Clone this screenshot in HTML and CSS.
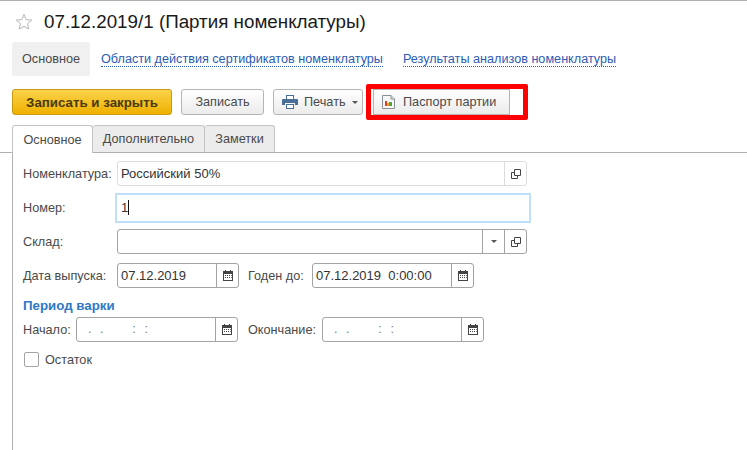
FILE: index.html
```html
<!DOCTYPE html>
<html lang="ru">
<head>
<meta charset="utf-8">
<title>Партия номенклатуры</title>
<link rel="stylesheet" href="styles.css">
</head>
<body>
	<div class="head">
		<svg class="star" width="18" height="17" viewBox="0 0 18 17"><path d="M9 1.500l2.200 5.100 5.500.5-4.200 3.600 1.300 5.400L9 13.200l-4.800 2.900 1.300-5.400L1.300 7.100l5.500-.5z" fill="none" stroke="#b5b5b5"/></svg>
		<h1 class="title">07.12.2019/1 (Партия номенклатуры)</h1>
	</div>

	<div class="sections">
		<span class="section active">Основное</span>
		<a class="section link">Области действия сертификатов номенклатуры</a>
		<a class="section link">Результаты анализов номенклатуры</a>
	</div>

	<div class="toolbar">
		<button class="btn primary">Записать и закрыть</button>
		<button class="btn save">Записать</button>
		<button class="btn print">
			<svg width="16" height="14" viewBox="0 0 16 14"><path d="M4 0h8v4H4z" fill="#4a6f96"/><path d="M5 1h6v3H5z" fill="#fff"/><path d="M1 4h14a1 1 0 0 1 1 1v5h-3V8H3v2H0V5a1 1 0 0 1 1-1z" fill="#4a6f96"/><path d="M4 9h8v5H4z" fill="#4a6f96"/><path d="M5 10h6v3H5z" fill="#fff"/></svg>
			Печать
			<span class="caret"></span>
		</button>
		<button class="btn report">
			<svg width="13" height="14" viewBox="0 0 13 14"><path d="M.5.500h8.500l3.500 3.500v9.500H.5z" fill="#f6f6f6" stroke="#8a8f96"/><path d="M9 .5v3.500h3.500" fill="#ddd" stroke="#8a8f96"/><path d="M3 6h2v5H3z" fill="#d8402a"/><path d="M5 8h2v3H5z" fill="#e8a020"/><path d="M7 7h3v4H7z" fill="#4aa83a"/></svg>
			Паспорт партии
		</button>
		<div class="highlight"></div>
	</div>

	<div class="tabs">
		<span class="tab active">Основное</span>
		<span class="tab extra">Дополнительно</span>
		<span class="tab notes">Заметки</span>
	</div>

	<div class="page">
		<div class="row row-nom">
			<label class="lbl">Номенклатура:</label>
			<div class="field light w-nom">
				<span class="val">Российский 50%</span>
				<span class="cell"><svg class="ic" width="10" height="10" viewBox="0 0 10 10"><path d="M3.500.500h6v6h-6zM3.500 3.500h-3v6h6v-3" fill="none" stroke="#444"/></svg></span>
			</div>
		</div>

		<div class="row row-num">
			<label class="lbl lbl-num">Номер:</label>
			<div class="focus">1<span class="cursor"></span></div>
		</div>

		<div class="row row-store">
			<label class="lbl">Склад:</label>
			<div class="field w-nom">
				<span class="val"></span>
				<span class="cell"><span class="caret"></span></span>
				<span class="cell"><svg class="ic" width="10" height="10" viewBox="0 0 10 10"><path d="M3.500.500h6v6h-6zM3.500 3.500h-3v6h6v-3" fill="none" stroke="#444"/></svg></span>
			</div>
		</div>

		<div class="row row-date">
			<label class="lbl">Дата выпуска:</label>
			<div class="field w-date">
				<span class="val">07.12.2019</span>
				<span class="cell"><svg class="ic" width="10" height="11" viewBox="0 0 10 11"><path d="M0 1h10v10H0z" fill="#444"/><path d="M2 0h1v2H2zM7 0h1v2H7z" fill="#444"/><path d="M1 4h8v6H1z" fill="#fff"/><path d="M2 5h1v1H2zM4 5h1v1H4zM6 5h1v1H6zM8 5h.7v1H8zM2 7h1v1H2zM4 7h1v1H4zM6 7h1v1H6zM8 7h.7v1H8z" fill="#444"/></svg></span>
			</div>
			<label class="lbl-second until">Годен до:</label>
			<div class="field w-until">
				<span class="val">07.12.2019&nbsp; 0:00:00</span>
				<span class="cell"><svg class="ic" width="10" height="11" viewBox="0 0 10 11"><path d="M0 1h10v10H0z" fill="#444"/><path d="M2 0h1v2H2zM7 0h1v2H7z" fill="#444"/><path d="M1 4h8v6H1z" fill="#fff"/><path d="M2 5h1v1H2zM4 5h1v1H4zM6 5h1v1H6zM8 5h.7v1H8zM2 7h1v1H2zM4 7h1v1H4zM6 7h1v1H6zM8 7h.7v1H8z" fill="#444"/></svg></span>
			</div>
		</div>

		<div class="group">Период варки</div>

		<div class="row">
			<label class="lbl lbl-start">Начало:</label>
			<div class="field w-until">
				<span class="val mask">&nbsp;&nbsp;.&nbsp;&nbsp;.&nbsp;&nbsp;&nbsp;&nbsp;&nbsp;&nbsp;&nbsp;:&nbsp;&nbsp;:</span>
				<span class="cell"><svg class="ic" width="10" height="11" viewBox="0 0 10 11"><path d="M0 1h10v10H0z" fill="#444"/><path d="M2 0h1v2H2zM7 0h1v2H7z" fill="#444"/><path d="M1 4h8v6H1z" fill="#fff"/><path d="M2 5h1v1H2zM4 5h1v1H4zM6 5h1v1H6zM8 5h.7v1H8zM2 7h1v1H2zM4 7h1v1H4zM6 7h1v1H6zM8 7h.7v1H8z" fill="#444"/></svg></span>
			</div>
			<label class="lbl-second finish">Окончание:</label>
			<div class="field w-until">
				<span class="val mask">&nbsp;&nbsp;.&nbsp;&nbsp;.&nbsp;&nbsp;&nbsp;&nbsp;&nbsp;&nbsp;&nbsp;:&nbsp;&nbsp;:</span>
				<span class="cell"><svg class="ic" width="10" height="11" viewBox="0 0 10 11"><path d="M0 1h10v10H0z" fill="#444"/><path d="M2 0h1v2H2zM7 0h1v2H7z" fill="#444"/><path d="M1 4h8v6H1z" fill="#fff"/><path d="M2 5h1v1H2zM4 5h1v1H4zM6 5h1v1H6zM8 5h.7v1H8zM2 7h1v1H2zM4 7h1v1H4zM6 7h1v1H6zM8 7h.7v1H8z" fill="#444"/></svg></span>
			</div>
		</div>

		<div class="check-row">
			<span class="box"></span>
			<span>Остаток</span>
		</div>
	</div>
</body>
</html>
```

FILE: styles.css
```css
html, body {
	margin: 0;
	height: 450px;
	overflow: hidden;
}
body {
	background: #fff;
	border-top: 1px solid #b0b0b0;
	box-sizing: border-box;
	font-family: "Liberation Sans", Arial, sans-serif;
	font-size: 12.7px;
	color: #4a4a4a;
}
.head {
	display: flex;
	align-items: center;
	height: 41px;
	padding-left: 15px;
}
.star {
	margin-right: 11px;
}
.title {
	margin: 0;
	font-size: 18.8px;
	font-weight: 400;
	color: #1a1a1a;
}
.sections {
	display: flex;
	align-items: center;
	height: 34px;
	padding-left: 12px;
}
.section.active {
	display: flex;
	align-items: center;
	justify-content: center;
	width: 78px;
	height: 34px;
	background: #f0f0f0;
	border-radius: 3px;
	margin-right: 11px;
}
.link {
	color: #2c5cb5;
	border-bottom: 1px dotted #2c5cb5;
	margin-right: 20px;
	font-size: 12.65px;
}
.toolbar {
	position: relative;
	display: flex;
	margin-top: 13px;
	padding-left: 12px;
	height: 26px;
}
.btn {
	display: flex;
	align-items: center;
	height: 26px;
	margin-right: 9px;
	padding: 0;
	border: 1px solid #b5b5b5;
	border-radius: 3px;
	background: linear-gradient(#ffffff, #ebebeb);
	font: 12.7px "Liberation Sans", Arial, sans-serif;
	color: #4a4a4a;
	box-sizing: border-box;
}
.primary {
	justify-content: center;
	width: 160px;
	background: linear-gradient(#fbd34c, #efb000);
	border-color: #c99a10;
	font-weight: 700;
	font-size: 13.3px;
	color: #4a3a10;
}
.save {
	justify-content: center;
	width: 83px;
}
.print {
	width: 90px;
	padding-left: 8px;
}
.print svg {
	margin-right: 6px;
}
.print .caret {
	margin-left: 6px;
}
.report {
	width: 137px;
	margin-left: 1px;
	padding-left: 8px;
	border-radius: 0;
}
.report svg {
	margin-right: 8px;
}
.caret {
	display: inline-block;
	border: 3px solid transparent;
	border-top: 3px solid #555;
	border-bottom: 0;
}
.highlight {
	position: absolute;
	left: 366px;
	top: -5px;
	width: 162px;
	height: 36px;
	box-sizing: border-box;
	border: 5px solid #f00;
	border-radius: 2px;
}
.tabs {
	display: flex;
	margin-top: 10px;
	padding-left: 12px;
	height: 28px;
	box-sizing: border-box;
	border-bottom: 1px solid #b0b0b0;
}
.tab {
	display: flex;
	align-items: center;
	justify-content: center;
	height: 27px;
	box-sizing: border-box;
	border: 1px solid #c4c4c4;
	border-left: 0;
	border-bottom: 0;
	border-radius: 3px 3px 0 0;
	background: #ececec;
}
.tab.active {
	width: 81px;
	height: 28px;
	border-left: 1px solid #c4c4c4;
	background: #fff;
}
.extra {
	width: 112px;
}
.notes {
	width: 70px;
}
.page {
	margin-left: 12px;
	padding: 8px 0 0 10px;
	height: 300px;
	border-left: 1px solid #b0b0b0;
}
.row {
	display: flex;
	align-items: center;
}
.row-num {
	margin-top: 7px;
}
.row-store {
	margin-top: 6px;
}
.row-date {
	margin-top: 9px;
}
.lbl {
	width: 94px;
}
.lbl-num {
	width: 92px;
}
.lbl-start {
	width: 53px;
}
.until {
	margin-left: 9px;
	width: 64px;
}
.finish {
	margin-left: 10px;
	width: 74px;
}
.field {
	display: flex;
	height: 25px;
	box-sizing: border-box;
	border: 1px solid #a3a3a3;
	border-radius: 3px;
	background: #fff;
}
.field.light {
	border-color: #dcdcdc;
}
.val {
	flex: 1;
	padding-left: 3px;
	line-height: 23px;
	font-size: 13px;
	color: #333;
}
.mask {
	color: #777;
	font-size: 12.7px;
	letter-spacing: .5px;
}
.cell {
	display: flex;
	align-items: center;
	justify-content: center;
	width: 21px;
	border-left: 1px solid #a3a3a3;
}
.light .cell {
	border-color: #dcdcdc;
}
.w-nom {
	width: 410px;
}
.w-date {
	width: 122px;
}
.w-until {
	width: 162px;
}
.focus {
	width: 416px;
	height: 30px;
	box-sizing: border-box;
	border: 2px solid #bfe0f8;
	padding-left: 4px;
	line-height: 25px;
	font-size: 13px;
	color: #333;
}
.cursor {
	display: inline-block;
	width: 1px;
	height: 15px;
	background: #111;
	vertical-align: -3px;
}
.group {
	margin-top: 10px;
	height: 19px;
	line-height: 15px;
	font-size: 13.3px;
	font-weight: 700;
	color: #2f78c4;
}
.check-row {
	display: flex;
	align-items: center;
	margin-top: 10px;
	padding-left: 1px;
}
.box {
	width: 15px;
	height: 15px;
	box-sizing: border-box;
	border: 1px solid #a3a3a3;
	border-radius: 2px;
	margin-right: 6px;
}
```
